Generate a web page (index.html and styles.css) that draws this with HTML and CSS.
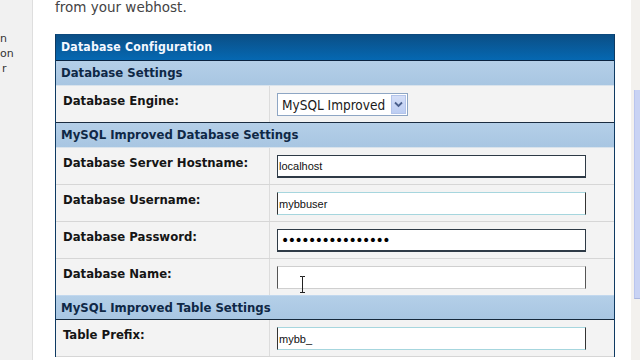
FILE: index.html
```html
<!DOCTYPE html>
<html lang="en">
<head>
<meta charset="utf-8">
<title>Database Configuration</title>
<link rel="stylesheet" href="styles.css">
</head>
<body>
<div class="page">
  <aside class="sidebar">
    <div class="side-line">n</div>
    <div class="side-line">on</div>
    <div class="side-line side-r">r</div>
  </aside>
  <main class="main">
    <p class="intro">from your webhost.</p>
    <div class="cfg">
      <div class="cfg-head">Database Configuration</div>
      <div class="sub sub-first">Database Settings</div>
      <div class="row row-engine">
        <div class="lbl">Database Engine:</div>
        <div class="val">
          <div class="select">
            <span class="sel-text">MySQL Improved</span>
            <span class="sel-btn">
              <svg width="9" height="7" viewBox="0 0 9 7"><path d="M1 1.5 L4.5 5 L8 1.5" fill="none" stroke="#4a5f8c" stroke-width="1.8"/></svg>
            </span>
          </div>
        </div>
      </div>
      <div class="sub sub-dark-top">MySQL Improved Database Settings</div>
      <div class="row">
        <div class="lbl">Database Server Hostname:</div>
        <div class="val"><input class="inp inp-dark" type="text" value="localhost"></div>
      </div>
      <div class="row">
        <div class="lbl">Database Username:</div>
        <div class="val"><input class="inp" type="text" value="mybbuser"></div>
      </div>
      <div class="row">
        <div class="lbl">Database Password:</div>
        <div class="val"><input class="inp inp-dark inp-pass" type="password" value="abcdefghijklmnop"></div>
      </div>
      <div class="row row-name">
        <div class="lbl">Database Name:</div>
        <div class="val">
          <input class="inp inp-gray" type="text" value="">
          <svg class="ibeam" width="7" height="18" viewBox="0 0 7 18"><path d="M1 0.5 H3.5 M3.5 0.5 V16.5 M3.5 0.5 H6 M1 16.5 H6" fill="none" stroke="#222" stroke-width="1"/></svg>
        </div>
      </div>
      <div class="sub sub-dark-bottom">MySQL Improved Table Settings</div>
      <div class="row">
        <div class="lbl">Table Prefix:</div>
        <div class="val"><input class="inp" type="text" value="mybb_"></div>
      </div>
    </div>
  </main>
  <div class="scroll"><div class="thumb"></div></div>
</div>
</body>
</html>
```

FILE: styles.css
```css
html, body {
  margin: 0;
  padding: 0;
  background: #ffffff;
}
body {
  width: 640px;
  height: 360px;
  overflow: hidden;
  font-family: "DejaVu Sans", Verdana, sans-serif;
}
.page {
  display: flex;
  height: 360px;
}
.sidebar {
  width: 32px;
  flex: none;
  background: #f1f1f1;
  border-right: 1px solid #dedede;
  padding-top: 31px;
  box-sizing: content-box;
  color: #333;
  font-size: 11px;
  line-height: 15px;
  overflow: hidden;
}
.side-line {
  white-space: nowrap;
}
.side-r {
  padding-left: 2px;
}
.main {
  width: 597px;
  flex: none;
  padding-left: 22px;
  box-sizing: border-box;
}
.intro {
  margin: 0;
  height: 34px;
  padding-top: 0;
  box-sizing: border-box;
  color: #444;
  font-size: 13.5px;
  line-height: 14px;
}
.cfg {
  width: 560px;
  box-sizing: border-box;
  border: 1px solid #0e3a62;
  border-top: 1px solid #0c4a7e;
  border-bottom: none;
  font-family: "DejaVu Sans Condensed", "DejaVu Sans", sans-serif;
  font-stretch: condensed;
  font-weight: bold;
}
.cfg-head {
  height: 25px;
  border-bottom: 1px solid #0a2340;
  background: linear-gradient(#0b4f86, #0568b2);
  color: #f4f8ff;
  font-size: 12.2px;
  line-height: 25px;
  padding-left: 5px;
  letter-spacing: 0.2px;
}
.sub {
  height: 24px;
  line-height: 24px;
  padding-left: 5px;
  background: linear-gradient(#b4cfe8, #a8c6e2);
  color: #0f2846;
  font-size: 13px;
  border-bottom: 1px solid #d9e3ec;
}
.sub-dark-top {
  border-top: 1px solid #1a2c40;
}
.sub-dark-bottom {
  border-top: 1px solid #c2d8ee;
  height: 23px;
  line-height: 23px;
  border-bottom: 1px solid #16293c;
}
.row {
  display: grid;
  grid-template-columns: 213px 1fr;
  height: 36px;
  background: #f3f3f3;
  border-bottom: 1px solid #d6d6d6;
}
.row-engine {
  border-bottom: none;
}
.row-name {
  border-bottom: none;
}
.lbl {
  padding: 7px 0 0 7px;
  font-size: 13px;
  line-height: 16px;
  color: #151515;
  white-space: nowrap;
}
.val {
  position: relative;
  border-left: 1px solid #dcdcdc;
  padding: 7px 0 0 7px;
}
.select {
  width: 131px;
  height: 23px;
  box-sizing: border-box;
  border: 1px solid #8ea6c4;
  background: #fff;
  display: flex;
  align-items: center;
  justify-content: space-between;
  padding: 1px 1px 1px 4px;
}
.sel-text {
  font-weight: normal;
  font-size: 13.5px;
  color: #1a1a1a;
  white-space: nowrap;
}
.sel-btn {
  width: 15px;
  height: 19px;
  box-sizing: border-box;
  background: linear-gradient(#d4def7, #bccdf2);
  border: 1px solid #b3c4ea;
  display: flex;
  align-items: center;
  justify-content: center;
}
.inp {
  display: block;
  width: 309px;
  height: 23px;
  box-sizing: border-box;
  margin: 0;
  padding: 0 1px;
  border: 1px solid #333;
  border-top-color: #a6d6de;
  border-bottom-color: #a6d6de;
  background: #fff;
  font-family: "Liberation Sans", Arial, sans-serif;
  font-size: 11px;
  color: #111;
  outline: none;
}
.inp-dark {
  border: 1px solid #2e3a46;
  border-bottom: 2px solid #2e3a46;
}
.inp-gray {
  border-color: #cfcfcf;
  border-left-color: #555;
  border-right-color: #555;
}
.inp-pass {
  padding-left: 3px;
  font-family: "DejaVu Sans", sans-serif;
  font-size: 14px;
  letter-spacing: -1.5px;
  color: #000;
}
.ibeam {
  position: absolute;
  left: 29px;
  top: 17px;
}
.scroll {
  width: 10px;
  flex: none;
  margin-left: 1px;
  background: #f3f1ee;
  padding-top: 90px;
  box-sizing: border-box;
}
.thumb {
  margin-left: 3px;
  height: 208px;
  background: #c9d3f4;
  border-left: 1px solid #b9c5ee;
  border-bottom: 1px solid #aab6de;
}
```
